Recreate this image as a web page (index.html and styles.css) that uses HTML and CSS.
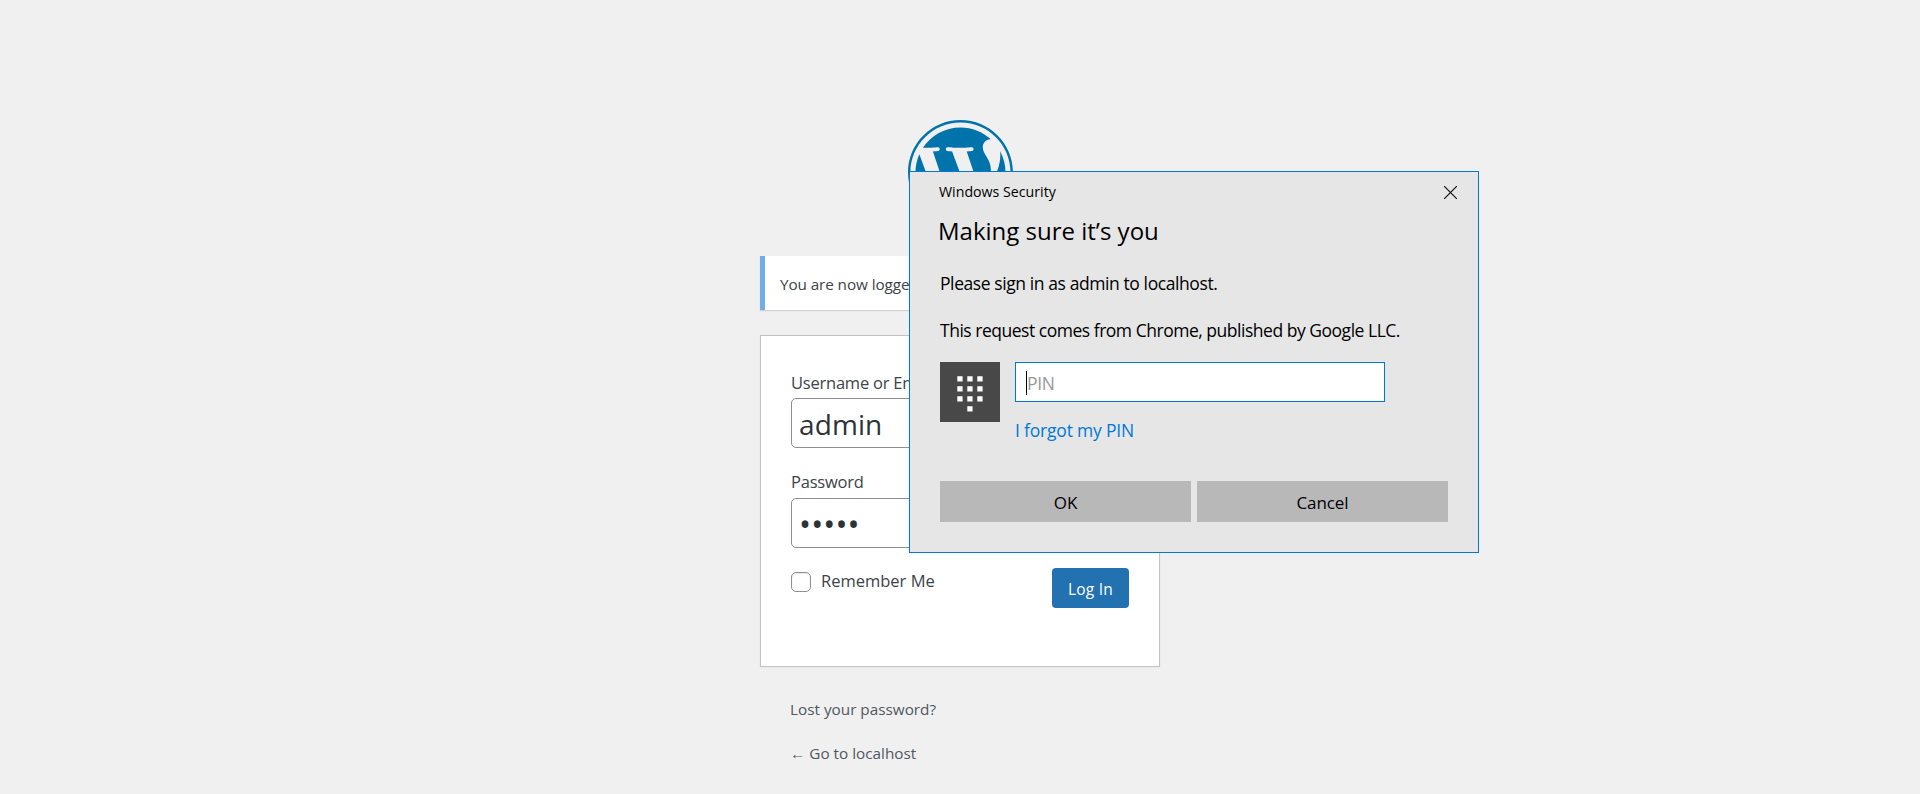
FILE: index.html
```html
<!DOCTYPE html>
<html lang="en">
<head>
<meta charset="utf-8">
<title>Log In</title>
<link rel="stylesheet" href="styles.css">
</head>
<body>
<main class="login">
  <svg class="logo" viewBox="0 0 122.52 122.52" fill="#0073aa" aria-label="WordPress">
    <path d="M8.708 61.26c0 20.802 12.089 38.779 29.619 47.298l-25.069-68.686c-2.916 6.536-4.55 13.769-4.55 21.388z"/>
    <path d="M96.74 58.608c0-6.495-2.333-10.993-4.334-14.494-2.664-4.329-5.161-7.995-5.161-12.324 0-4.831 3.664-9.328 8.825-9.328.233 0 .454.029.681.042-9.35-8.566-21.807-13.796-35.489-13.796-18.36 0-34.513 9.42-43.91 23.688 1.233.037 2.395.063 3.382.063 5.497 0 14.006-.667 14.006-.667 2.833-.167 3.167 3.994.337 4.329 0 0-2.847.335-6.015.501l19.138 56.925 11.501-34.493-8.188-22.434c-2.83-.166-5.511-.501-5.511-.501-2.832-.166-2.5-4.496.332-4.329 0 0 8.679.667 13.843.667 5.496 0 14.006-.667 14.006-.667 2.835-.167 3.168 3.994.337 4.329 0 0-2.853.335-6.015.501l18.992 56.494 5.242-17.517c2.272-7.269 4.001-12.49 4.001-16.989z"/>
    <path d="M62.184 65.857l-15.768 45.819c4.708 1.384 9.687 2.141 14.846 2.141 6.12 0 11.989-1.058 17.452-2.979-.141-.225-.269-.464-.374-.724z"/>
    <path d="M107.376 36.046c.226 1.674.354 3.471.354 5.404 0 5.333-.996 11.328-3.996 18.824l-16.053 46.413c15.624-9.111 26.133-26.038 26.133-45.426.001-9.137-2.333-17.729-6.438-25.215z"/>
    <path d="M61.262 0C27.483 0 0 27.481 0 61.26c0 33.783 27.483 61.263 61.262 61.263 33.778 0 61.265-27.48 61.265-61.263C122.526 27.481 95.039 0 61.262 0zm0 119.715c-32.23 0-58.453-26.223-58.453-58.455 0-32.23 26.222-58.451 58.453-58.451 32.229 0 58.45 26.221 58.45 58.451 0 32.232-26.221 58.455-58.45 58.455z"/>
  </svg>
  <p class="message">You are now logged out.</p>
  <form class="card">
    <label class="label">Username or Email Address</label>
    <div class="field">admin</div>
    <label class="label password-label">Password</label>
    <div class="field bullets">•••••</div>
    <div class="row">
      <label class="remember"><span class="check"></span>Remember Me</label>
      <button class="submit" type="button">Log In</button>
    </div>
  </form>
  <a class="link">Lost your password?</a>
  <a class="link back">← Go to localhost</a>
</main>

<section class="dialog" role="dialog">
  <header class="dialog-bar">
    <span>Windows Security</span>
    <svg class="close" viewBox="0 0 13 13" stroke="#111" stroke-width="1.2"><path d="M0 0l13 13M13 0L0 13"/></svg>
  </header>
  <h1 class="title">Making sure it’s you</h1>
  <p class="text">Please sign in as admin to localhost.</p>
  <p class="text request">This request comes from Chrome, published by Google LLC.</p>
  <div class="credential">
    <svg class="tile" viewBox="0 0 60 60" fill="#fff">
      <path d="M17.3 14.3h5.3v5.3h-5.3zM27.3 14.3h5.3v5.3h-5.3zM37.3 14.3h5.3v5.3h-5.3zM17.3 24.3h5.3v5.3h-5.3zM27.3 24.3h5.3v5.3h-5.3zM37.3 24.3h5.3v5.3h-5.3zM17.3 34.3h5.3v5.3h-5.3zM27.3 34.3h5.3v5.3h-5.3zM37.3 34.3h5.3v5.3h-5.3zM27.3 44.3h5.3v5.3h-5.3z"/>
    </svg>
    <div class="entry">
      <div class="pin"><span class="caret"></span>PIN</div>
      <a class="forgot">I forgot my PIN</a>
    </div>
  </div>
  <div class="actions">
    <button class="action" type="button">OK</button>
    <button class="action" type="button">Cancel</button>
  </div>
</section>
</body>
</html>
```
FILE: styles.css
```css
* { box-sizing: border-box; }
body {
  margin: 0;
  height: 794px;
  overflow: hidden;
  background: #f0f0f0;
  color: #3c434a;
  font-family: "Open Sans", "Noto Sans", sans-serif;
}
p, h1 { margin: 0; }
button { font-family: inherit; border: 0; padding: 0; }

.login {
  display: flex;
  flex-direction: column;
  width: 400px;
  margin: 0 auto;
  padding-top: 120px;
}
.logo { width: 105px; height: 105px; margin: 0 auto 31px; }
.message {
  height: 54px;
  padding-left: 15px;
  border-left: 5px solid #72aee6;
  background: #fff;
  box-shadow: 0 1px 1px rgba(0, 0, 0, .12);
  font-size: 15.3px;
  letter-spacing: -.1px;
  line-height: 57px;
  white-space: nowrap;
}
.card {
  height: 332px;
  margin-top: 25px;
  padding: 33px 30px 0;
  border: 1px solid #c3c4c7;
  background: #fff;
  box-shadow: 0 1px 3px rgba(0, 0, 0, .04);
}
.label {
  display: block;
  height: 29px;
  line-height: 27px;
  font-size: 16.5px;
  letter-spacing: -.22px;
  white-space: nowrap;
}
.password-label { margin-top: 21px; line-height: 25px; }
.field {
  height: 50px;
  padding-left: 7px;
  border: 1px solid #8c8f94;
  border-radius: 5px;
  color: #2c3338;
  font-size: 28px;
  letter-spacing: .1px;
  line-height: 50px;
}
.bullets { font-size: 32px; letter-spacing: .1px; line-height: 50px; }
.row {
  display: flex;
  justify-content: space-between;
  padding-top: 20px;
}
.remember {
  display: flex;
  gap: 10px;
  height: 28px;
  font-size: 16.5px;
  line-height: 26px;
}
.check {
  width: 20px;
  height: 20px;
  margin-top: 4px;
  border: 1px solid #8c8f94;
  border-radius: 5px;
  box-shadow: inset 0 1px 2px rgba(0, 0, 0, .1);
}
.submit {
  width: 77px;
  height: 40px;
  border-radius: 4px;
  background: #2271b1;
  color: #fff;
  font-size: 15.5px;
  letter-spacing: .2px;
  line-height: 43px;
}
.link {
  margin: 32px 0 0 30px;
  color: #50575e;
  font-size: 15.3px;
  line-height: 21px;
}
.back { margin-top: 23px; }

.dialog {
  position: absolute;
  left: 909px;
  top: 171px;
  width: 570px;
  height: 382px;
  padding: 0 30px;
  border: 1px solid #0078d7;
  background: #e6e6e6;
  color: #000;
}
.dialog-bar {
  display: flex;
  justify-content: space-between;
  height: 40px;
  margin: 0 -9px 0 -1px;
  font-size: 14.2px;
  line-height: 39px;
}
.close { width: 13px; height: 13px; margin-top: 14px; }
.title {
  height: 38px;
  margin-left: -2px;
  font-size: 24px;
  font-weight: 400;
  line-height: 38px;
}
.text {
  height: 47px;
  padding-top: 20px;
  font-size: 17.5px;
  letter-spacing: -.41px;
  line-height: 27px;
  white-space: nowrap;
}
.request { letter-spacing: -.48px; }
.credential {
  display: flex;
  gap: 15px;
  margin-top: 18px;
}
.tile { width: 60px; height: 60px; background: #484848; }
.entry { display: flex; flex-direction: column; }
.pin {
  display: flex;
  align-items: center;
  width: 370px;
  height: 40px;
  padding: 2px 0 0 10px;
  border: 1px solid #0078d7;
  background: #fff;
  color: #999;
  font-size: 17.5px;
  letter-spacing: -.3px;
}
.caret { width: 1px; height: 24px; margin-top: -1px; background: #000; }
.forgot {
  margin-top: 15px;
  color: #0078d7;
  font-size: 17.5px;
  letter-spacing: -.2px;
  line-height: 27px;
}
.actions { display: flex; gap: 6px; margin-top: 37px; }
.action {
  width: 251px;
  height: 41px;
  background: #b8b8b8;
  color: #000;
  font-size: 17px;
  letter-spacing: -.1px;
  line-height: 43px;
}
```
